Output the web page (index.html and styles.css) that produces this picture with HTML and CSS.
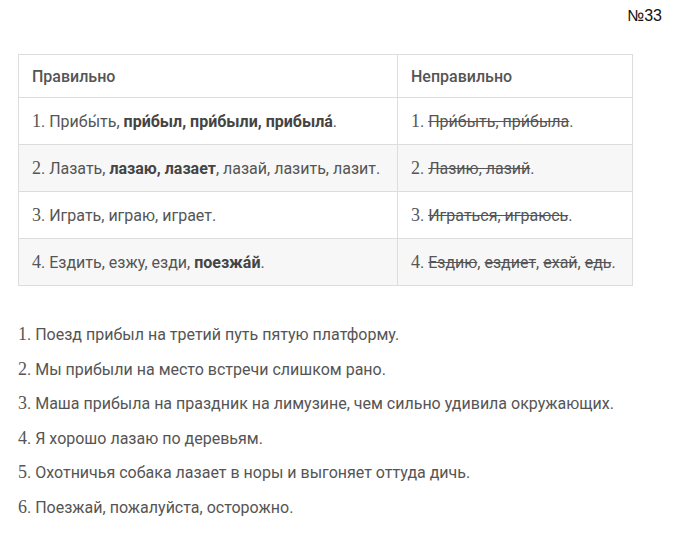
FILE: index.html
```html
<!DOCTYPE html>
<html lang="ru">
<head>
<meta charset="utf-8">
<link rel="stylesheet" href="styles.css">
</head>
<body>
<div class="page">
  <div class="num">№33</div>
  <table class="tbl">
    <thead>
      <tr><th class="c1">Правильно</th><th class="c2">Неправильно</th></tr>
    </thead>
    <tbody>
      <tr><td><span class="n">1</span>. Прибы́ть, <b>при́был, при́были, прибыла́</b>.</td><td><span class="n">1</span>. <s>При́быть, при́была</s>.</td></tr>
      <tr class="alt"><td><span class="n">2</span>. Лазать, <b>лазаю, лазает</b>, лазай, лазить, лазит.</td><td><span class="n">2</span>. <s>Лазию, лазий</s>.</td></tr>
      <tr><td><span class="n">3</span>. Играть, играю, играет.</td><td><span class="n">3</span>. <s>Играться, играюсь</s>.</td></tr>
      <tr class="alt"><td><span class="n">4</span>. Ездить, езжу, езди, <b>поезжа́й</b>.</td><td><span class="n">4</span>. <s>Ездию</s>, <s>ездиет</s>, <s>exaй</s>, <s>едь</s>.</td></tr>
    </tbody>
  </table>
  <ul class="list">
    <li><span class="n">1</span>. Поезд прибыл на третий путь пятую платформу.</li>
    <li><span class="n">2</span>. Мы прибыли на место встречи слишком рано.</li>
    <li><span class="n">3</span>. Маша прибыла на праздник на лимузине, чем сильно удивила окружающих.</li>
    <li><span class="n">4</span>. Я хорошо лазаю по деревьям.</li>
    <li><span class="n">5</span>. Охотничья собака лазает в норы и выгоняет оттуда дичь.</li>
    <li><span class="n">6</span>. Поезжай, пожалуйста, осторожно.</li>
  </ul>
</div>
</body>
</html>
```
FILE: styles.css
```css
html, body { margin: 0; padding: 0; background: #fff; }
body { font-family: Roboto, "Noto Sans", sans-serif; color: #555; }
.page { padding: 6px 24px 0 18px; }
.num { text-align: right; font-family: "Liberation Sans", Arial, sans-serif; font-size: 16px; color: #111; height: 48px; line-height: 20px; }
.tbl { border-collapse: collapse; width: 615px; font-size: 16px; }
.tbl th, .tbl td { border: 1px solid #ddd; text-align: left; padding: 0 13px; }
.tbl th { font-weight: 500; height: 42px; color: #555; }
.tbl td { height: 46px; }
.tbl .c1 { width: 352px; }
.tbl tr.alt td { background: #f7f7f7; }
.tbl b { font-weight: 700; color: #444; }
.n { font-family: "Liberation Serif", "Times New Roman", serif; font-size: 18px; }
.list { list-style: none; margin: 31px 0 0; padding: 0; font-size: 16px; }
.list li { height: 34.6px; line-height: 34.6px; }
```
